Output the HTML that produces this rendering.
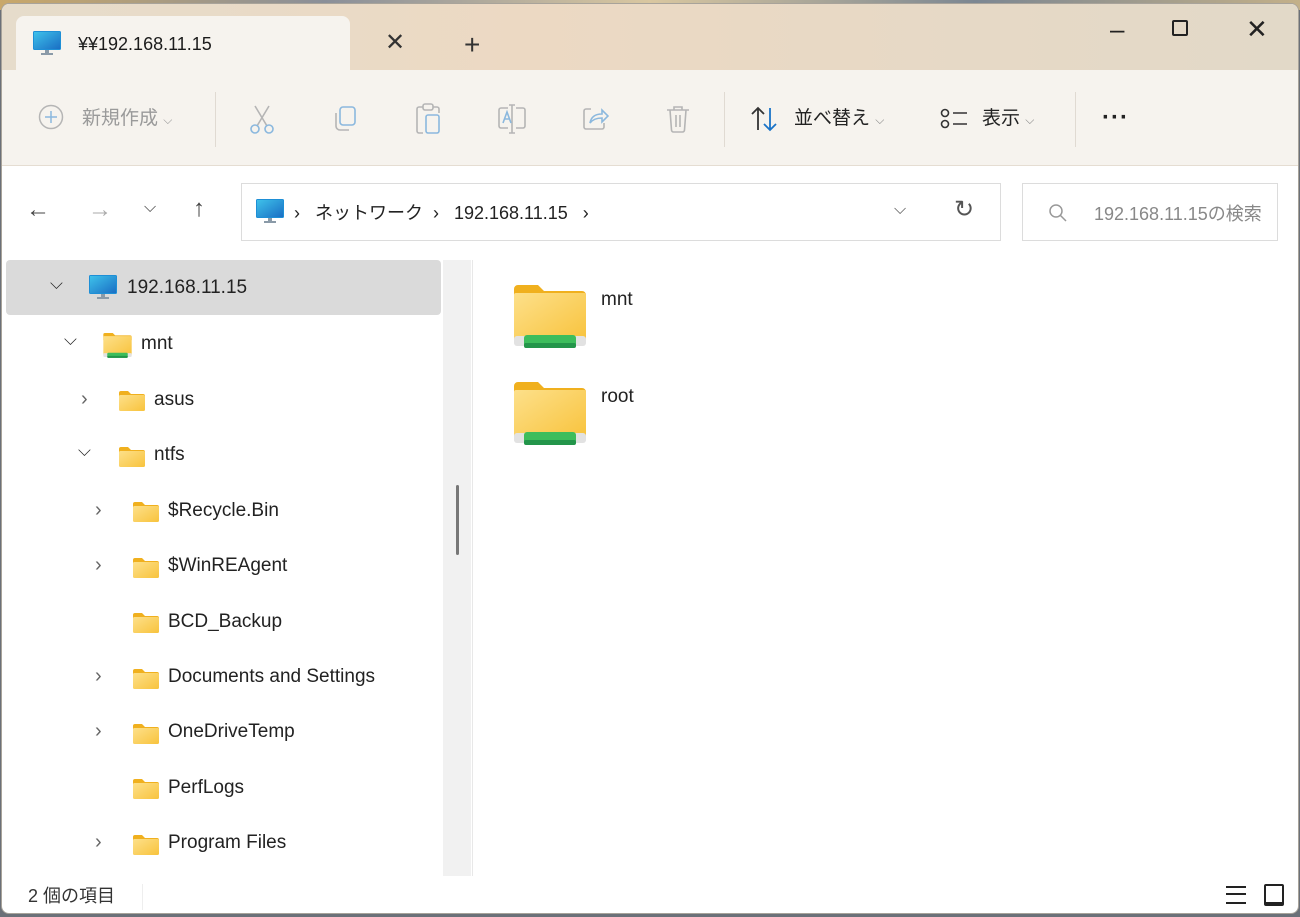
<!DOCTYPE html>
<html><head><meta charset="utf-8"><style>
*{margin:0;padding:0;box-sizing:border-box}
body{width:1300px;height:917px;overflow:hidden;background:#6b7078;font-family:"Liberation Sans","Noto Sans CJK JP",sans-serif;position:relative}
.desk{position:absolute;left:0;top:0;width:1300px;height:10px;background:linear-gradient(90deg,#c9a86a,#8a8f99,#d9c7a0,#7c8792,#c3b089)}
.win{position:absolute;left:1px;top:3px;width:1298px;height:911px;background:#fff;border-radius:8px;overflow:hidden;border:1px solid #a8a39a}
.titlebar{position:absolute;left:0;top:0;width:100%;height:68px;background:linear-gradient(90deg,#e6dccb,#ecd9c3 40%,#e2d9c8)}
.tab{position:absolute;left:14px;top:12px;width:334px;height:57px;background:#f6f3ee;border-radius:8px 8px 0 0}
.t{position:absolute;white-space:nowrap}
.toolbar{position:absolute;left:0;top:66px;width:100%;height:96px;background:#f6f3ee;border-bottom:1px solid #e5ddd2}
.sep{position:absolute;width:1px;background:#e0dad2}
.box{position:absolute;border:1px solid #dcdcdc;background:#fff}
.icon{position:absolute}
</style></head><body>
<div class="desk"></div>
<div class="win">
<div class="titlebar"></div>
<div class="tab"></div>
<svg class="icon" style="left:30px;top:26px" width="30" height="26" viewBox="0 0 30 26"><rect x="1" y="1" width="28" height="19" rx="1.5" fill="#1e8fd6"/><rect x="2" y="2" width="26" height="17" fill="url(#g1)"/><defs><linearGradient id="g1" x1="0" y1="0" x2="1" y2="1"><stop offset="0" stop-color="#3ec1ea"/><stop offset="1" stop-color="#1a6fc4"/></linearGradient></defs><rect x="13" y="20" width="4" height="4" fill="#8a9aa8"/><rect x="9" y="23" width="12" height="2" fill="#8a9aa8"/></svg>
<div class="t" style="left:76px;top:30px;font-size:18px;color:#1b1b1b">¥¥192.168.11.15</div>
<div class="t" style="left:383px;top:24px;font-size:24px;color:#333">✕</div>
<div class="t" style="left:462px;top:25px;font-size:28px;color:#333;font-weight:300">+</div>
<div class="t" style="left:1108px;top:10px;font-size:26px;color:#222">–</div>
<div style="position:absolute;left:1170px;top:16px;width:16px;height:16px;border:2px solid #222;border-radius:2px"></div>
<div class="t" style="left:1244px;top:10px;font-size:26px;color:#222">✕</div>

<div class="toolbar">
<svg class="icon" style="left:36px;top:34px" width="26" height="26"><circle cx="13" cy="13" r="11.5" fill="none" stroke="#b5b5b5" stroke-width="1.5"/><path d="M13 7v12M7 13h12" stroke="#8bb8de" stroke-width="1.5"/></svg>
<div class="t" style="left:80px;top:33px;font-size:19px;color:#9a9a9a">新規作成 <span style="font-size:12px">⌵</span></div>
<div class="sep" style="left:213px;top:22px;height:55px"></div>
<svg class="icon" style="left:246px;top:34px" width="28" height="30" fill="none" stroke="#8bb8de" stroke-width="1.6"><path d="M7 2l12 20M21 2L9 22" stroke="#b5b5b5"/><circle cx="7" cy="25" r="4"/><circle cx="21" cy="25" r="4"/></svg>
<svg class="icon" style="left:330px;top:36px" width="26" height="28" fill="none" stroke-width="1.6"><rect x="8" y="1" width="15" height="18" rx="3" stroke="#8bb8de"/><path d="M4 7v13a4 4 0 0 0 4 4h9" stroke="#b5b5b5"/></svg>
<svg class="icon" style="left:412px;top:33px" width="28" height="32" fill="none" stroke-width="1.6"><path d="M9 4H5a2 2 0 0 0-2 2v22a2 2 0 0 0 2 2h4M19 4h4a2 2 0 0 1 2 2v4" stroke="#b5b5b5"/><rect x="9" y="1" width="10" height="6" rx="2" stroke="#b5b5b5"/><rect x="12" y="12" width="13" height="18" rx="2" stroke="#8bb8de"/></svg>
<svg class="icon" style="left:494px;top:33px" width="32" height="32" fill="none" stroke-width="1.6"><path d="M12 5H5a2 2 0 0 0-2 2v16a2 2 0 0 0 2 2h7M20 5h7a2 2 0 0 1 2 2v16a2 2 0 0 1-2 2h-7M16 2v28M13 2h6M13 30h6" stroke="#b5b5b5"/><path d="M7 20l4-11 4 11M8.5 16h5" stroke="#8bb8de"/></svg>
<svg class="icon" style="left:579px;top:36px" width="28" height="26" fill="none" stroke-width="1.6"><path d="M10 3H5a2 2 0 0 0-2 2v16a2 2 0 0 0 2 2h16a2 2 0 0 0 2-2v-4" stroke="#b5b5b5"/><path d="M9 17c1-6 5-9 12-9V4l6 6-6 6v-4c-5 0-9 1-12 5z" stroke="#8bb8de"/></svg>
<svg class="icon" style="left:663px;top:34px" width="26" height="30" fill="none" stroke="#b5b5b5" stroke-width="1.6"><path d="M2 6h22M9 6V3h8v3M5 6l1.5 20a2 2 0 0 0 2 2h9a2 2 0 0 0 2-2L21 6M11 11v12M15 11v12"/></svg>
<div class="sep" style="left:722px;top:22px;height:55px"></div>
<svg class="icon" style="left:748px;top:36px" width="30" height="26" fill="none" stroke-width="1.8"><path d="M8 24V2M2 8l6-6 6 6" stroke="#333"/><path d="M20 2v22M14 18l6 6 6-6" stroke="#1a73c7"/></svg>
<div class="t" style="left:792px;top:33px;font-size:19px;color:#222">並べ替え <span style="font-size:12px;color:#888">⌵</span></div>
<svg class="icon" style="left:938px;top:38px" width="30" height="22" fill="none" stroke="#333" stroke-width="1.6"><circle cx="5" cy="5" r="3.5"/><circle cx="5" cy="16" r="3.5"/><path d="M13 5h14M13 16h14"/></svg>
<div class="t" style="left:980px;top:33px;font-size:19px;color:#222">表示 <span style="font-size:12px;color:#888">⌵</span></div>
<div class="sep" style="left:1073px;top:22px;height:55px"></div>
<div class="t" style="left:1100px;top:34px;font-size:24px;color:#222;letter-spacing:1px;font-weight:bold">···</div>
</div>

<div class="t" style="left:24px;top:192px;font-size:24px;color:#444">←</div>
<div class="t" style="left:86px;top:192px;font-size:24px;color:#aaa">→</div>
<div class="t" style="left:142px;top:195px;font-size:16px;color:#444">⌵</div>
<div class="t" style="left:191px;top:191px;font-size:24px;color:#444">↑</div>

<div class="box" style="left:239px;top:179px;width:760px;height:58px"></div>
<svg class="icon" style="left:253px;top:194px" width="30" height="26" viewBox="0 0 30 26"><rect x="1" y="1" width="28" height="19" rx="1.5" fill="#1e8fd6"/><rect x="2" y="2" width="26" height="17" fill="url(#g1)"/><rect x="13" y="20" width="4" height="4" fill="#8a9aa8"/><rect x="9" y="23" width="12" height="2" fill="#8a9aa8"/></svg>
<div class="t" style="left:292px;top:195px;font-size:18px;color:#222">›&nbsp;&nbsp; ネットワーク &nbsp;›&nbsp;&nbsp; 192.168.11.15 &nbsp;&nbsp;›</div>
<div class="t" style="left:892px;top:197px;font-size:16px;color:#555">⌵</div>
<div class="t" style="left:952px;top:191px;font-size:24px;color:#555">↻</div>
<div class="box" style="left:1020px;top:179px;width:256px;height:58px"></div>
<svg class="icon" style="left:1046px;top:199px" width="20" height="20" fill="none" stroke="#999" stroke-width="1.5"><circle cx="8" cy="8" r="6"/><path d="M12.5 12.5L18 18"/></svg>
<div class="t" style="left:1092px;top:196px;font-size:18px;color:#888">192.168.11.15の検索</div>

<div style="position:absolute;left:4px;top:256px;width:435px;height:55px;background:#dadada;border-radius:4px"></div>
<div style="position:absolute;left:441px;top:256px;width:28px;height:616px;background:#f1f1f1"></div>
<div style="position:absolute;left:454px;top:481px;width:3px;height:70px;background:#777;border-radius:2px"></div>
<div style="position:absolute;left:470px;top:256px;width:1px;height:616px;background:#e8e8e8"></div>

<svg width="0" height="0" style="position:absolute"><defs>
<linearGradient id="fy" x1="0" y1="0" x2="1" y2="1"><stop offset="0" stop-color="#fde08a"/><stop offset="1" stop-color="#f8c33d"/></linearGradient>
<symbol id="fold" viewBox="0 0 28 22"><path d="M1 3a2 2 0 0 1 2-2h7l3 3h12a2 2 0 0 1 2 2v3H1z" fill="#f0b01e"/><rect x="1" y="5" width="26" height="16" rx="1.5" fill="url(#fy)"/></symbol>
<symbol id="nfold" viewBox="0 0 72 66"><path d="M0 4a4 4 0 0 1 4-4h20l6 6h38a4 4 0 0 1 4 4v8H0z" fill="#f0b01e"/><rect x="0" y="8" width="72" height="48" rx="2" fill="url(#fy)"/><rect x="0" y="51" width="72" height="10" rx="3" fill="#e2e2e2"/><rect x="10" y="50" width="52" height="13" rx="3" fill="#3dbd5c"/><rect x="10" y="58" width="52" height="5" rx="2" fill="#23954a"/></symbol>
</defs></svg>

<div class="t" style="left:48px;top:270px;font-size:17px;color:#222">⌵</div>
<svg class="icon" style="left:86px;top:270px" width="30" height="26" viewBox="0 0 30 26"><rect x="1" y="1" width="28" height="19" rx="1.5" fill="#1e8fd6"/><rect x="2" y="2" width="26" height="17" fill="url(#g1)"/><rect x="13" y="20" width="4" height="4" fill="#8a9aa8"/><rect x="9" y="23" width="12" height="2" fill="#8a9aa8"/></svg>
<div class="t" style="left:125px;top:273px;font-size:19px;color:#222">192.168.11.15</div>

<div class="t" style="left:62px;top:326px;font-size:17px;color:#222">⌵</div>
<svg class="icon" style="left:101px;top:329px" width="29" height="26"><use href="#nfold" x="0" y="0" width="29" height="26"/></svg>
<div class="t" style="left:139px;top:329px;font-size:19px;color:#222">mnt</div>

<div class="t" style="left:79px;top:384px;font-size:20px;color:#666">›</div>
<svg class="icon" style="left:116px;top:386px" width="28" height="22"><use href="#fold"/></svg>
<div class="t" style="left:152px;top:385px;font-size:19px;color:#222">asus</div>

<div class="t" style="left:76px;top:437px;font-size:17px;color:#222">⌵</div>
<svg class="icon" style="left:116px;top:442px" width="28" height="22"><use href="#fold"/></svg>
<div class="t" style="left:152px;top:440px;font-size:19px;color:#222">ntfs</div>

<div class="t" style="left:93px;top:495px;font-size:20px;color:#666">›</div>
<svg class="icon" style="left:130px;top:497px" width="28" height="22"><use href="#fold"/></svg>
<div class="t" style="left:166px;top:496px;font-size:19px;color:#222">$Recycle.Bin</div>

<div class="t" style="left:93px;top:550px;font-size:20px;color:#666">›</div>
<svg class="icon" style="left:130px;top:553px" width="28" height="22"><use href="#fold"/></svg>
<div class="t" style="left:166px;top:551px;font-size:19px;color:#222">$WinREAgent</div>

<svg class="icon" style="left:130px;top:608px" width="28" height="22"><use href="#fold"/></svg>
<div class="t" style="left:166px;top:607px;font-size:19px;color:#222">BCD_Backup</div>

<div class="t" style="left:93px;top:661px;font-size:20px;color:#666">›</div>
<svg class="icon" style="left:130px;top:664px" width="28" height="22"><use href="#fold"/></svg>
<div class="t" style="left:166px;top:662px;font-size:19px;color:#222">Documents and Settings</div>

<div class="t" style="left:93px;top:716px;font-size:20px;color:#666">›</div>
<svg class="icon" style="left:130px;top:719px" width="28" height="22"><use href="#fold"/></svg>
<div class="t" style="left:166px;top:717px;font-size:19px;color:#222">OneDriveTemp</div>

<svg class="icon" style="left:130px;top:774px" width="28" height="22"><use href="#fold"/></svg>
<div class="t" style="left:166px;top:773px;font-size:19px;color:#222">PerfLogs</div>

<div class="t" style="left:93px;top:827px;font-size:20px;color:#666">›</div>
<svg class="icon" style="left:130px;top:830px" width="28" height="22"><use href="#fold"/></svg>
<div class="t" style="left:166px;top:828px;font-size:19px;color:#222">Program Files</div>

<svg class="icon" style="left:512px;top:281px" width="72" height="66"><use href="#nfold" width="72" height="66"/></svg>
<div class="t" style="left:599px;top:285px;font-size:19px;color:#222">mnt</div>
<svg class="icon" style="left:512px;top:378px" width="72" height="66"><use href="#nfold" width="72" height="66"/></svg>
<div class="t" style="left:599px;top:382px;font-size:19px;color:#222">root</div>

<div class="t" style="left:26px;top:878px;font-size:18px;color:#333">2 個の項目</div>
<div class="sep" style="left:140px;top:880px;height:26px;background:#eee"></div>
<div style="position:absolute;left:1224px;top:882px;width:20px;height:18px;border-top:2px solid #222;border-bottom:2px solid #222"><div style="margin-top:5px;height:2px;background:#222"></div></div>
<div style="position:absolute;left:1262px;top:880px;width:20px;height:22px;border:2px solid #222;border-bottom-width:4px;border-radius:2px"></div>
</div>
</body></html>
